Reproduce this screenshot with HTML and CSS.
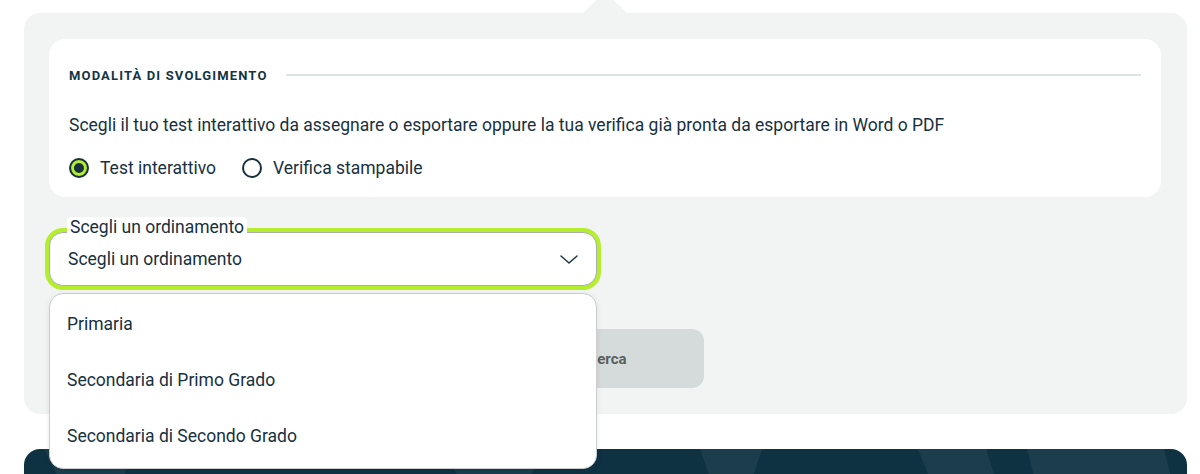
FILE: index.html
```html
<!DOCTYPE html>
<html lang="it">
<head>
    <meta charset="UTF-8">
    <title>Modalità di svolgimento</title>
    <link rel="stylesheet" href="styles.css">
</head>
<body>
<div class="panel">
    <div class="card">
        <div class="card-head">
            <span>Modalità di svolgimento</span>
            <span class="rule"></span>
        </div>
        <p class="intro">Scegli il tuo test interattivo da assegnare o esportare oppure la tua verifica già pronta da esportare in Word o PDF</p>
        <div class="radios">
            <label class="radio"><span class="dot checked"></span>Test interattivo</label>
            <label class="radio"><span class="dot"></span>Verifica stampabile</label>
        </div>
    </div>

    <div class="field">
        <span class="field-label">Scegli un ordinamento</span>
        <div class="select">
            <span>Scegli un ordinamento</span>
            <svg class="chevron" width="18" height="9" viewBox="0 0 18 9">
                <path d="M1 1 L9 8 L17 1" fill="none" stroke="#1b3542" stroke-width="1.5" stroke-linecap="round" stroke-linejoin="round"/>
            </svg>
        </div>
        <ul class="menu">
            <li>Primaria</li>
            <li>Secondaria di Primo Grado</li>
            <li>Secondaria di Secondo Grado</li>
        </ul>
    </div>

    <div class="actions">
        <button class="btn">Cerca</button>
    </div>
</div>

<div class="footer">
    <svg class="footer-art" width="1163" height="40" viewBox="0 0 1163 40" preserveAspectRatio="none">
        <polygon points="20,0 110,0 95,40 40,40" fill="#1b3d4c"/>
        <polygon points="420,0 520,0 500,40 440,40" fill="#1b3d4c"/>
        <polygon points="676,0 738,0 725,40 690,40" fill="#1b3d4c"/>
        <polygon points="894,0 962,0 975,40 910,40" fill="#1b3d4c"/>
        <polygon points="1003,0 1140,0 1150,40 1013,40" fill="#1b3d4c"/>
    </svg>
</div>
</body>
</html>
```

FILE: styles.css
```css
body{
    margin: 0;
    background: #fff;
    font-family: Roboto, "Liberation Sans", sans-serif;
    color: #17313e;
}
.panel{
    position: relative;
    width: 1163px;
    box-sizing: border-box;
    margin: 13px 0 0 24px;
    padding: 26px 26px 26px 25px;
    background: #f1f4f3;
    border-radius: 16px;
}
.panel::before{
    content: "";
    position: absolute;
    left: 559px;
    top: -13px;
    width: 44px;
    height: 13px;
    background: #f1f4f3;
    clip-path: polygon(0 100%, 30% 0, 70% 0, 100% 100%);
}
.card{
    background: #fff;
    border-radius: 16px;
    padding: 28px 20px 17px;
}
.card-head{
    display: flex;
    align-items: center;
    height: 16px;
    font-size: 13px;
    font-weight: 700;
    letter-spacing: 1.15px;
    text-transform: uppercase;
    color: #133544;
}
.rule{
    flex: 1;
    height: 2px;
    margin-left: 18px;
    background: #dde3e2;
}
.intro{
    margin: 30px 0 0;
    font-size: 17.5px;
    line-height: 24px;
}
.radios{
    display: flex;
    gap: 26px;
    margin-top: 19px;
    font-size: 17.5px;
    line-height: 24px;
}
.radio{
    display: flex;
    align-items: center;
    gap: 11px;
}
.dot{
    width: 20px;
    height: 20px;
    box-sizing: border-box;
    border: 2px solid #17313e;
    border-radius: 50%;
    background: #fff;
}
.dot.checked{
    background: #b4ee2c;
    box-shadow: inset 0 0 0 3px #b4ee2c, inset 0 0 0 8px #17313e;
}
.field{
    position: relative;
    width: 548px;
    margin-top: 35px;
}
.field-label{
    position: absolute;
    left: 18px;
    top: -15px;
    padding: 0 3px;
    background: #fff;
    border-radius: 4px;
    font-size: 17.5px;
    line-height: 20px;
    z-index: 2;
}
.select{
    display: flex;
    align-items: center;
    justify-content: space-between;
    height: 54px;
    box-sizing: border-box;
    padding: 0 18px 0 18px;
    background: #fff;
    border: 1px solid #a9afb0;
    border-radius: 14px;
    box-shadow: 0 0 0 4px #b4ee2c;
    font-size: 17.5px;
}
.menu{
    position: absolute;
    left: 0;
    top: 61px;
    width: 548px;
    box-sizing: border-box;
    margin: 0;
    padding: 2px 0 4px;
    list-style: none;
    background: #fff;
    border: 1px solid #c9cdcd;
    border-radius: 14px;
    box-shadow: 0 2px 6px rgba(0, 0, 0, .08);
    z-index: 3;
}
.menu li{
    height: 56px;
    line-height: 56px;
    padding-left: 17px;
    font-size: 17.5px;
}
.actions{
    margin-top: 43px;
    padding-left: 461px;
}
.btn{
    width: 194px;
    height: 59px;
    border: 0;
    border-radius: 12px;
    background: #d5dbda;
    color: #5a5f60;
    font-family: inherit;
    font-size: 15px;
    font-weight: 700;
}
.footer{
    width: 1163px;
    height: 40px;
    margin: 35px 0 0 24px;
    background: #0f3243;
    border-radius: 16px 16px 0 0;
    overflow: hidden;
}
.footer-art{
    display: block;
}
```
